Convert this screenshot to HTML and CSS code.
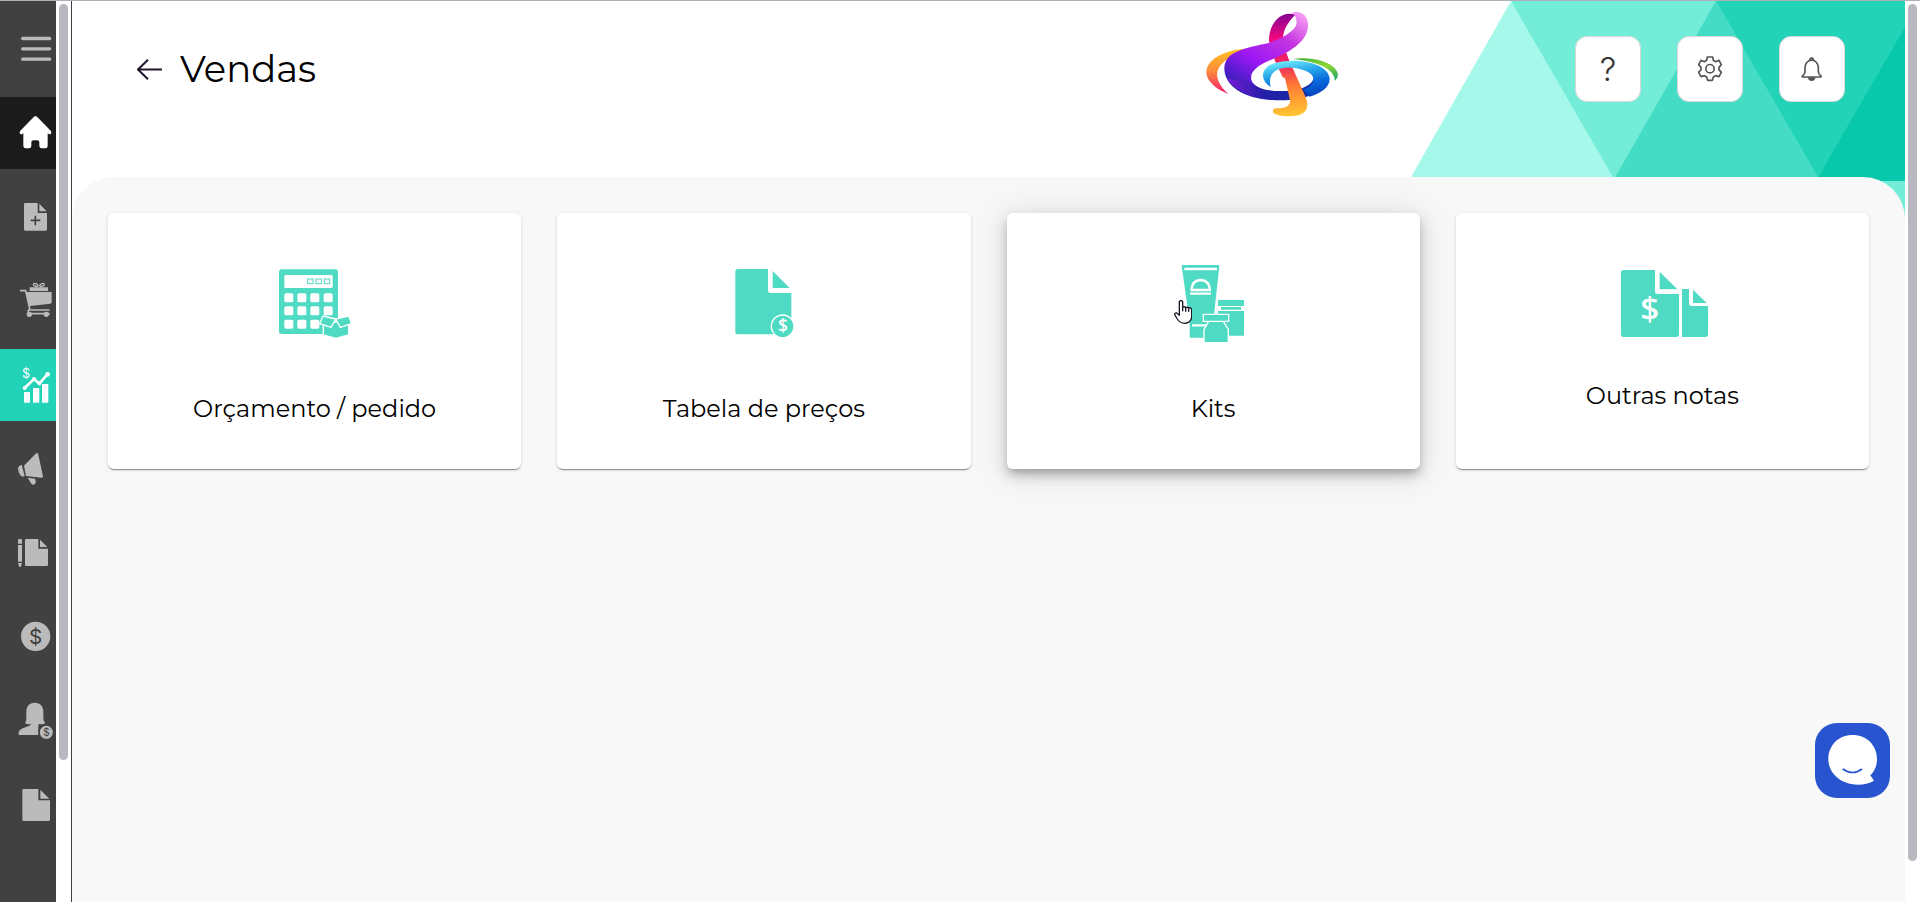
FILE: index.html
```html
<!DOCTYPE html>
<html lang="pt-BR">
<head>
<meta charset="utf-8">
<meta name="viewport" content="width=device-width, initial-scale=1">
<title>Vendas</title>
<link rel="stylesheet" href="styles.css">
</head>
<body>
<div class="app">
  <nav class="sidebar" aria-label="Menu principal">
    <button class="sidebar-toggle" type="button" aria-label="Abrir menu">
      <svg class="side-icon" viewBox="42 75 126 144"><path d="M68 115.500H149M68 146.500H149M68 177.500H149" stroke="currentColor" stroke-width="10" stroke-linecap="round"/></svg>
    </button>
    <ul class="side-list">
      <li><a class="side-link side-link-home" href="#" aria-label="Início">
        <svg class="side-icon" viewBox="42 327 126 144"><path d="M106 349q4 0 8 4l38 39q4 5 1 9-3 3-7 1l-3-2v38q0 7-7 7h-11q-7 0-7-7v-11q0-6-6-6h-11q-7 0-7 6v11q0 7-7 7H77q-7 0-7-7v-38l-3 2q-4 2-7-1-3-4 1-9l38-39q4-4 7-4z"/></svg>
      </a></li>
      <li><a class="side-link" href="#" aria-label="Cadastros">
        <svg class="side-icon" viewBox="42 39 126 144"><path d="M75 69h38v30h28v49q0 4-4 4H76q-4 0-4-4V73q0-4 3-4zM118 71l22 23h-22z"/><path d="M92 121h29M106 107v29" stroke="#414141" stroke-width="5"/></svg>
      </a></li>
      <li><a class="side-link" href="#" aria-label="Compras">
        <svg class="side-icon" viewBox="42 291 126 144"><path d="M89 322h55v11H89zM79 336h76v30q0 4-4 5l-60 7h-5z"/><path d="M62 332h15l13 58h-5v11h62M90 390h57" fill="none" stroke="currentColor" stroke-width="5" stroke-linecap="round" stroke-linejoin="round"/><circle cx="88" cy="403" r="8"/><circle cx="139" cy="403" r="8"/><g fill="none" stroke="currentColor" stroke-width="4"><ellipse cx="107" cy="315" rx="7" ry="4" transform="rotate(25 107 315)"/><ellipse cx="126" cy="315" rx="7" ry="4" transform="rotate(-25 126 315)"/></g></svg>
      </a></li>
      <li><a class="side-link side-link-active" href="#" aria-label="Vendas" aria-current="page">
        <svg class="side-icon" viewBox="42 543 126 144"><rect x="72" y="636" width="18" height="32" rx="2"/><rect x="99" y="624" width="19" height="44" rx="2"/><rect x="126" y="612" width="19" height="56" rx="2"/><path d="M74 624l28-27 16 14 25-29" fill="none" stroke="currentColor" stroke-width="8"/><circle cx="74" cy="624" r="6"/><circle cx="102" cy="597" r="6"/><circle cx="118" cy="610" r="6"/><circle cx="143" cy="583" r="7"/><text class="glyph" x="78" y="595" font-size="38">$</text></svg>
      </a></li>
      <li><a class="side-link" href="#" aria-label="Marketing">
        <svg class="side-icon" viewBox="42 45 126 144"><path d="M112 69q3 1 3 5l14 65q0 4-4 4l-47-5-6-31 35-36zM65 104l9 34q-7 4-13-2-7-10-7-22 2-8 11-10zM83 143l22 3q5 9-1 17-6 3-10-2z"/></svg>
      </a></li>
      <li><a class="side-link" href="#" aria-label="Notas">
        <svg class="side-icon" viewBox="42 297 126 144"><path d="M78 327h37v29h29v48q0 4-4 4H79q-4 0-4-4v-73q0-4 3-4zM120 329l22 22h-22zM54 341v-10q0-4 4-4h4q4 0 4 4v10zM54 345h12v50H54zM54 399h12l-4 12h-4z"/></svg>
      </a></li>
      <li><a class="side-link" href="#" aria-label="Financeiro">
        <svg class="side-icon" viewBox="42 549 126 144"><circle cx="107" cy="619" r="44"/><text class="glyph glyph-dark" x="107" y="642" font-size="62">$</text></svg>
      </a></li>
      <li><a class="side-link" href="#" aria-label="Clientes">
        <svg class="side-icon" viewBox="42 111 126 144"><path d="M104 128c18 0 26 13 26 27v20q0 9 6 14-7 6-17 3-4 0-4 4v29H56v-6q0-9 12-14l20-8q5-2 5-6-9 4-18-2 4-5 4-14v-20c0-14 8-27 25-27z"/><circle cx="139" cy="217" r="22" stroke="#414141" stroke-width="5"/><text class="glyph glyph-dark" x="139" y="228" font-size="31">$</text></svg>
      </a></li>
      <li><a class="side-link" href="#" aria-label="Relatórios">
        <svg class="side-icon" viewBox="42 363 126 144"><path d="M70 387h45v34h35v58q0 4-4 4H71q-4 0-4-4v-88q0-4 3-4zM121 389l27 27h-27z"/></svg>
      </a></li>
    </ul>
  </nav>
  <div class="scroll-track"><div class="scroll-thumb scroll-thumb-menu"></div></div>

  <div class="page">
    <svg class="page-art" viewBox="1411 1 494 230" aria-hidden="true">
      <path fill="#73edd8" d="M1511 1H1905V231H1614z"/>
      <path fill="#a6f9ea" d="M1511 1L1614 179V231H1380L1411 177z"/>
      <path fill="#44dcc5" d="M1716 1L1820 181H1613z"/>
      <path fill="#23d3b8" d="M1716 1H1905V181H1820z"/>
      <path fill="#08c8ab" d="M1905 27V181H1816z"/>
    </svg>
    <header class="page-header">
      <a class="back" href="#" aria-label="Voltar">
        <svg class="back-icon" viewBox="411 177 78 63"><path d="M486 208.500H414M444 179l-30 29.500 30 29" fill="none" stroke="#21162e" stroke-width="6"/></svg>
      </a>
      <h1 class="title">Vendas</h1>
      <svg class="logo" viewBox="45 33 408 321" role="img" aria-label="Logotipo">
        <defs>
          <linearGradient id="arcLeft" x1="0" y1="0" x2="0" y2="1"><stop offset="0" stop-color="#ffc21e"/><stop offset=".5" stop-color="#fb8a3c"/><stop offset="1" stop-color="#f8186c"/></linearGradient>
          <linearGradient id="arcRight" x1="0" y1="0" x2="1" y2="1"><stop offset="0" stop-color="#3dae3c"/><stop offset=".55" stop-color="#92d836"/><stop offset="1" stop-color="#13a66e"/></linearGradient>
          <linearGradient id="stem" gradientUnits="userSpaceOnUse" x1="290" y1="45" x2="310" y2="345"><stop offset="0" stop-color="#8a0494"/><stop offset=".22" stop-color="#f0087e"/><stop offset=".5" stop-color="#f02860"/><stop offset=".7" stop-color="#ff7a34"/><stop offset="1" stop-color="#ffc531"/></linearGradient>
          <linearGradient id="ribbon" gradientUnits="userSpaceOnUse" x1="330" y1="40" x2="170" y2="290"><stop offset="0" stop-color="#f79bf5"/><stop offset=".3" stop-color="#c434e0"/><stop offset=".65" stop-color="#9a18f4"/><stop offset=".85" stop-color="#5a1bd0"/><stop offset="1" stop-color="#2a22a8"/></linearGradient>
          <linearGradient id="base" gradientUnits="userSpaceOnUse" x1="110" y1="260" x2="418" y2="230"><stop offset="0" stop-color="#7a1bdc"/><stop offset=".35" stop-color="#231fa6"/><stop offset=".75" stop-color="#162ba4"/><stop offset="1" stop-color="#0757d8"/></linearGradient>
          <linearGradient id="swirl" gradientUnits="userSpaceOnUse" x1="290" y1="180" x2="310" y2="290"><stop offset="0" stop-color="#72edfa"/><stop offset=".35" stop-color="#28a8ea"/><stop offset=".7" stop-color="#0868dc"/><stop offset="1" stop-color="#064cc4"/></linearGradient>
        </defs>
        <path fill="url(#arcLeft)" d="M190 147C120 142 50 174 49 216c0 28 30 52 66 66-50-46-58-101 75-135z"/>
        <path fill="url(#arcRight)" d="M308 177c60-8 125 10 135 42 2 8-1 17-8 23-2-34-48-57-127-65z"/>
        <path fill="url(#stem)" d="M316 44c-45-15-80 28-79 79l18 60 24 50h38l-30-80c-14-36-12-68 29-109z"/>
        <path fill="url(#ribbon)" d="M302 38c36-10 55 13 52 43-4 45-56 76-107 97-47 17-77 44-58 71 18 22 50 26 93 24l20 25c-115 13-199-29-199-93 1-48 54-59 120-73 52-12 105-46 96-70-2-16-7-24-17-24z"/>
        <path fill="url(#base)" d="M110 235c26 42 92 65 160 66 76-1 138-24 148-68l-46-3c-4 28-44 42-90 43-44 2-78-6-96-24z"/>
        <path fill="url(#swirl)" d="M242 260c-31-16-34-57 13-71 70-19 162 2 164 48 0 24-24 42-60 53l-20-22c36-8 46-42 4-57-48-18-116-10-101 49z"/>
        <path fill="url(#stem)" d="M278 204h30l37 83c16 35 4 55-28 60-27 4-52 2-66-7-5-8-1-14 7-15 27 1 45-8 42-25z"/>
      </svg>
      <div class="actions">
        <button class="action" type="button" aria-label="Ajuda">
          <span class="help">?</span>
        </button>
        <button class="action" type="button" aria-label="Configurações">
          <svg class="action-icon" viewBox="885 162 90 90"><g fill="none" stroke="#555" stroke-width="5" stroke-linejoin="round"><circle cx="930" cy="206" r="12.500"/><path d="M922 171h16l2 10 7 4 10-4 7 13-7 8v7l7 8-7 13-10-3-7 4-3 10h-14l-3-10-7-4-10 3-7-13 7-8v-7l-7-8 7-13 10 4 7-4z"/></g></svg>
        </button>
        <button class="action" type="button" aria-label="Notificações">
          <svg class="action-icon" viewBox="1191 162 90 90"><path d="M1230 180v-3q5-7 10 0v3M1235 180q-18 2-20 22v13q0 7-8 13v3h56v-3q-8-6-8-13v-13q-2-20-20-22z" fill="none" stroke="#555" stroke-width="5" stroke-linejoin="round"/><path fill="#555" d="M1223 232h24q-2 11-12 11t-12-11z"/></svg>
        </button>
      </div>
    </header>

    <main class="panel">
      <a class="card" href="#">
        <svg class="card-icon" viewBox="81 45 288 288" aria-hidden="true">
          <rect x="117" y="88" width="177" height="194" rx="8"/>
          <g fill="#fff"><rect x="133" y="105" width="145" height="39" rx="4"/>
          <rect x="133" y="160" width="27" height="27" rx="5"/><rect x="172" y="160" width="27" height="27" rx="5"/><rect x="211" y="160" width="27" height="27" rx="5"/><rect x="251" y="160" width="27" height="27" rx="5"/>
          <rect x="133" y="199" width="27" height="27" rx="5"/><rect x="172" y="199" width="27" height="27" rx="5"/><rect x="211" y="199" width="27" height="27" rx="5"/><rect x="251" y="199" width="27" height="27" rx="5"/>
          <rect x="133" y="239" width="27" height="27" rx="5"/><rect x="172" y="239" width="27" height="27" rx="5"/><rect x="211" y="239" width="27" height="27" rx="5"/></g>
          <g fill="none" stroke="currentColor" stroke-width="3"><rect x="203" y="117" width="16" height="14"/><rect x="228" y="117" width="16" height="14"/><rect x="253" y="117" width="16" height="14"/></g>
          <g stroke="#fff" stroke-width="4" stroke-linejoin="round"><path d="M250 246h76v39l-39 10-37-10z"/><path d="M249 228l38 9-14 25-34-11zM326 228l-39 9 14 25 34-11z"/></g>
        </svg>
        <span class="card-label">Orçamento / pedido</span>
      </a>
      <a class="card" href="#">
        <svg class="card-icon" viewBox="228 45 288 288" aria-hidden="true">
          <path d="M294 87h90v64q0 8 8 8h62v124H294q-8 0-8-8V95q0-8 8-8zM398 93l51 51h-51z"/>
          <circle cx="428" cy="259" r="34" stroke="#fff" stroke-width="4"/>
          <text class="glyph glyph-white" x="429" y="277" font-size="52">$</text>
        </svg>
        <span class="card-label">Tabela de preços</span>
      </a>
      <a class="card card-hover" href="#">
        <svg class="card-icon" viewBox="45 45 288 288" aria-hidden="true">
          <path d="M99 75h106q3 0 3 4l-16 146v68h-73v-48L95 79q0-4 4-4z"/>
          <path d="M103 87h98M120 161h63M126 256h42" stroke="#fff" stroke-width="7"/>
          <path d="M124 150q2-29 28-30 26 1 28 30z" fill="none" stroke="#fff" stroke-width="7" stroke-linejoin="round"/>
          <path fill="#fff" d="M207 170l-17 74h21z"/>
          <path d="M204 180h78v18h-78zM213 201h60v8h-60zM204 213h78v74h-78z"/>
          <g stroke="#fff" stroke-width="4"><path d="M160 223h76v21h-76zM176 244h44l15 24v40h-73v-40z"/></g>
        </svg>
        <span class="card-label">Kits</span>
        <svg class="pointer" viewBox="72 180 54 72" aria-hidden="true"><path d="M88 218v-33q5-7 10 0v16q6-2 9 2 6-3 9 1 7-2 9 4v25q-5 17-22 17-13-1-21-13l-8-13q0-6 6-5l8 7zM98 200v14M107 203v12M116 204v11" fill="#fff" stroke="#1d1826" stroke-width="4" stroke-linejoin="round"/></svg>
      </a>
      <a class="card" href="#">
        <svg class="card-icon card-icon-wide" viewBox="162 45 288 249" aria-hidden="true">
          <path d="M191 90h94v64q0 8 8 8h64v121q0 8-8 8H191q-8 0-8-8V98q0-8 8-8zM299 95l53 53h-53zM366 147h21v43q0 8 8 8h49v85q0 8-8 8h-70zM399 149l41 40h-41z"/>
          <text class="glyph glyph-white" x="269" y="243" font-size="100">$</text>
        </svg>
        <span class="card-label">Outras notas</span>
      </a>
    </main>
  </div>
  <div class="scroll-track"><div class="scroll-thumb scroll-thumb-page"></div></div>
</div>

<button class="chat" type="button" aria-label="Abrir chat">
  <svg class="chat-icon" viewBox="105 69 225 225"><path fill="#fff" d="M218 105c42 0 73 31 73 72 0 20-7 36-20 49l11 16c-14 8-30 12-48 12-52-1-89-34-89-77 0-41 31-72 73-72z"/><path d="M188 207q30 21 58 0" fill="none" stroke="#2855cf" stroke-width="5"/></svg>
</button>
</body>
</html>
```
FILE: styles.css
```css
* {
  box-sizing: border-box;
}

body {
  margin: 0;
  font-family: Montserrat, Inter, "Open Sans", sans-serif;
  color: #000;
  background: #fff;
  overflow: hidden;
}

a {
  color: inherit;
  text-decoration: none;
}

button {
  margin: 0;
  padding: 0;
  border: 0;
  background: none;
  font: inherit;
  color: inherit;
  cursor: pointer;
}

svg {
  display: block;
  fill: currentColor;
}

.app {
  display: grid;
  grid-template-columns: 56px 15px minmax(0, 1fr) 15px;
  height: 100vh;
  border-top: 1px solid #b0aeb6;
}

/* Sidebar */
.sidebar {
  background: #414141;
  color: #bbb;
  overflow: hidden;
}

.sidebar-toggle {
  display: flex;
  align-items: center;
  width: 100%;
  height: 96px;
  padding-left: 14px;
}

.side-list {
  display: flex;
  flex-direction: column;
  gap: 12px;
  margin: 0;
  padding: 0;
  list-style: none;
}

.side-link {
  display: flex;
  align-items: center;
  height: 72px;
  padding-left: 14px;
}

.side-link-home {
  background: #1b1b1b;
  color: #fff;
}

.side-link-active {
  background: #23d3b8;
  color: #fff;
}

.side-icon {
  width: 42px;
  height: 48px;
}

.glyph {
  font-family: Inter, sans-serif;
  font-weight: 400;
  text-anchor: middle;
}

.glyph-dark {
  fill: #414141;
}

.glyph-white {
  fill: #fff;
  font-family: "Open Sans", sans-serif;
  font-weight: 600;
}

/* Scroll bars */
.scroll-track {
  padding: 3px;
  background: #fff;
}

.scroll-thumb {
  border-radius: 5px;
  background: #b9b7bf;
}

.scroll-thumb-menu {
  height: 84.5%;
}

.scroll-thumb-page {
  height: 95.8%;
}

/* Page */
.page {
  position: relative;
  display: flex;
  flex-direction: column;
  border-left: 1px solid #414141;
}

.page-art {
  position: absolute;
  top: 0;
  right: 0;
  width: 494px;
  height: 230px;
}

.page-header {
  position: relative;
  display: flex;
  align-items: flex-start;
  height: 176px;
  padding: 35px 60px 0 65px;
}

.back {
  display: flex;
  align-items: center;
  height: 66px;
}

.back-icon {
  width: 26px;
  height: 21px;
}

.title {
  margin: 0 0 0 17px;
  font-size: 37px;
  font-weight: 400;
  line-height: 66px;
}

.logo {
  width: 136px;
  height: 107px;
  margin: -25px 234px 0 auto;
}

.actions {
  display: flex;
  gap: 36px;
}

.action {
  display: flex;
  align-items: center;
  justify-content: center;
  width: 66px;
  height: 66px;
  border: 1px solid #d8d8d8;
  border-radius: 12px;
  background: #fff;
}

.action-icon {
  width: 30px;
  height: 30px;
}

.help {
  color: #333;
  font-family: Inter, sans-serif;
  font-size: 33px;
  font-weight: 300;
  line-height: 48px;
}

.panel {
  position: relative;
  flex: 1;
  display: grid;
  grid-template-columns: repeat(4, minmax(0, 1fr));
  align-items: start;
  gap: 36px;
  padding: 36px;
  border-radius: 42px 42px 0 0;
  background: #f8f8f8;
}

.card {
  position: relative;
  display: flex;
  flex-direction: column;
  align-items: center;
  gap: 42px;
  min-height: 256px;
  padding: 42px 16px;
  border-radius: 6px;
  background: #fff;
  box-shadow: 0 2px 1px -1px rgba(0, 0, 0, .3), 0 1px 1px rgba(0, 0, 0, .14), 0 1px 4px rgba(0, 0, 0, .12);
}

.card-hover {
  box-shadow: 0 6px 8px -3px rgba(0, 0, 0, .24), 0 6px 14px 1px rgba(0, 0, 0, .16), 0 3px 32px 8px rgba(0, 0, 0, .07);
}

.card-icon {
  width: 96px;
  height: 96px;
  color: #4fdac4;
}

.card-icon-wide {
  height: 83px;
}

.card-label {
  font-size: 24px;
  line-height: 32px;
  text-align: center;
}

.pointer {
  position: absolute;
  top: 87px;
  left: calc(50% - 39px);
  width: 18px;
  height: 24px;
}

/* Chat launcher */
.chat {
  position: fixed;
  right: 30px;
  bottom: 104px;
  width: 75px;
  height: 75px;
  border-radius: 22px;
  background: #2855cf;
}

.chat-icon {
  width: 100%;
  height: 100%;
}
```
